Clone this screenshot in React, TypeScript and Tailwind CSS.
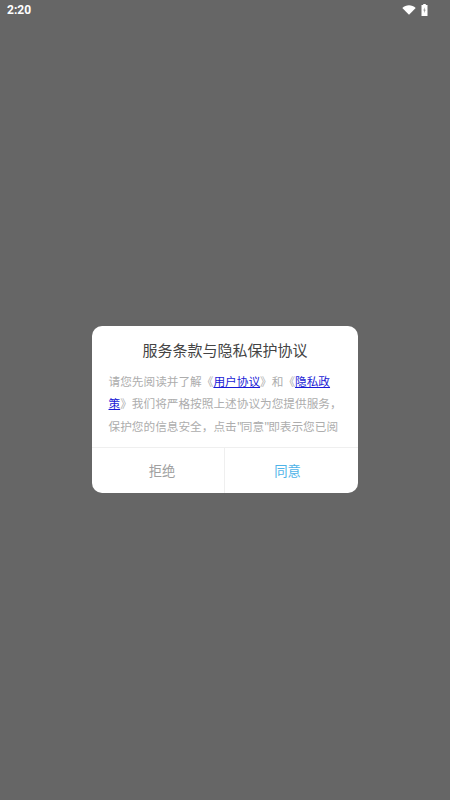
const cjk = { fontFamily: '"Noto Sans CJK SC", "Liberation Sans", sans-serif' };

function StatusBar() {
  return (
    <div className="flex h-[20px] items-center justify-between pl-[7px] pr-[22px]">
      <span className="text-[12px] font-bold text-white" style={{ fontFamily: 'Roboto, sans-serif' }}>2:20</span>
      <div className="flex items-center gap-[5px]">
        <svg width="14" height="10" viewBox="0 0 14 10">
          <path d="M0.3 3 C4 -0.7 10 -0.7 13.7 3 L7 9.8 Z" fill="#fff" />
        </svg>
        <svg width="7" height="12" viewBox="0 0 7 12">
          <path d="M2.2 0 H4.8 V1 H6.5 V12 H0.5 V1 H2.2 Z" fill="#fff" />
          <path d="M3.6 3.2 L2.4 6.6 H3.4 L3.2 9.2 L4.6 5.8 H3.6 Z" fill="#888" />
        </svg>
      </div>
    </div>
  );
}

export default function App() {
  return (
    <div className="flex h-[800px] w-[450px] flex-col bg-[#666666]" style={cjk}>
      <StatusBar />
      <div className="flex flex-1 items-start justify-center pt-[306px]">
        <div className="flex h-[167px] w-[266px] flex-col overflow-hidden rounded-[10px] bg-white">
          <h2 className="pt-[12px] text-center text-[15px] leading-[23px] font-normal text-[#444444]">服务条款与隐私保护协议</h2>
          <div className="mt-[9px] h-[77px] overflow-hidden pl-[16.5px] text-[11.67px] leading-[22.3px] whitespace-nowrap text-[#adadad]">
            请您先阅读并了解《<a className="text-[#1a1ad6] underline">用户协议</a>》和《<a className="text-[#1a1ad6] underline">隐私政</a>
            <br />
            <a className="text-[#1a1ad6] underline">策</a>》我们将严格按照上述协议为您提供服务，
            <br />
            保护您的信息安全，点击<span className="tracking-[-1.5px]">"</span>同意<span className="tracking-[-1.5px]">"</span>即表示您已阅
          </div>
          <div className="flex flex-1 border-t border-[#efefef] text-[13.33px]">
            <button className="w-[133px] border-r border-[#efefef] pl-[8px] text-[#a0a0a0]">拒绝</button>
            <button className="flex-1 pr-[8px] text-[#4fb3e8]">同意</button>
          </div>
        </div>
      </div>
    </div>
  );
}
